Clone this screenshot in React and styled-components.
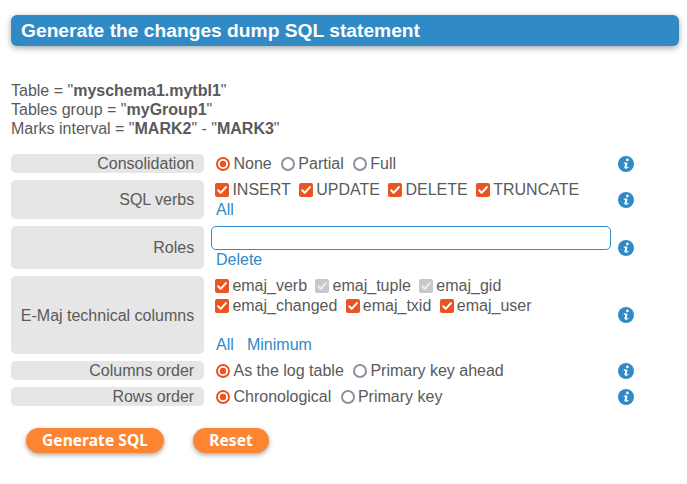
import React from "react";
import styled, { createGlobalStyle } from "styled-components";

const BLUE = "#308ac6";
const ORANGE = "#eb5420";

const GlobalStyle = createGlobalStyle`
  *, *::before, *::after { box-sizing: border-box; }
  body {
    margin: 0;
    background: #fff;
    color: #5a5a5a;
    font: 16px/19px "Liberation Sans", Arial, sans-serif;
  }
`;

const Page = styled.main`
  padding: 15px 8px 20px 11px;
`;

const Heading = styled.h1`
  margin: 0;
  height: 31px;
  padding-left: 10px;
  border-radius: 6px;
  background: ${BLUE};
  color: #fff;
  font-size: 19.2px;
  letter-spacing: 0.015px;
  line-height: 31px;
  white-space: nowrap;
  box-shadow: 0 2px 6px rgba(0, 0, 0, 0.35);
`;

const Summary = styled.p`
  margin: 35px 0 16px;
`;

const Form = styled.form`
  margin: 0;
`;

const Fields = styled.div`
  display: grid;
  grid-template-columns: 193px 400px 16px;
  column-gap: 7px;
  row-gap: 7px;
`;

const FieldName = styled.div`
  display: flex;
  align-items: center;
  justify-content: flex-end;
  height: ${(p) => p.$height}px;
  padding-right: 9.8px;
  border-radius: 5px;
  background: #e6e6e6;
  white-space: nowrap;
`;

const FieldValue = styled.div`
  min-width: 0;
`;

const OptionLine = styled.div`
  display: flex;
  height: ${(p) => p.$height || 20}px;
  padding-left: ${(p) => (p.$radio ? 5.4 : 4.3)}px;
  gap: ${(p) => p.$gap || 8.4}px;
  white-space: nowrap;
`;

const OptionLabel = styled.label`
  display: flex;
  align-items: flex-start;
  gap: 3.1px;
`;

const Mark = styled.svg`
  display: block;
  flex: none;
  width: 14px;
  height: 14px;
  margin-top: 3px;
`;

const Links = styled.div`
  display: flex;
  gap: 13.2px;
  height: 19px;
  padding-left: 5px;
  margin-top: ${(p) => p.$top || 0}px;
`;

const Link = styled.a`
  color: ${BLUE};
  text-decoration: none;
  cursor: pointer;
`;

const TextInput = styled.input`
  display: block;
  width: 400px;
  height: 24px;
  border: 1px solid ${BLUE};
  border-radius: 5px;
  background: #fff;
  outline: none;
`;

const InfoIcon = styled.svg`
  display: block;
  width: 16px;
  height: 16px;
  align-self: center;
`;

const Actions = styled.div`
  display: flex;
  gap: 29px;
  margin: 22px 0 0 15px;
`;

const Button = styled.button`
  width: ${(p) => p.$width}px;
  height: 25px;
  padding: 0;
  border: 0;
  border-radius: 13px;
  background: #fd8531;
  color: #fff;
  font: 700 15.5px/25px "Noto Sans", "Open Sans", sans-serif;
  letter-spacing: 0.06px;
  white-space: nowrap;
  box-shadow: 0 2px 5px rgba(0, 0, 0, 0.35);
`;

function Radio({ checked, children }) {
  return (
    <OptionLabel>
      <Mark viewBox="0 0 14 14">
        <circle cx="7" cy="7" r="6" fill="#fff" stroke={checked ? ORANGE : "#8f8f9d"} strokeWidth="2" />
        {checked && <circle cx="7" cy="7" r="3.2" fill={ORANGE} />}
      </Mark>
      {children}
    </OptionLabel>
  );
}

function Check({ disabled, children }) {
  return (
    <OptionLabel>
      <Mark viewBox="0 0 14 14">
        <rect width="14" height="14" rx="2" fill={disabled ? "#c7c7cc" : ORANGE} />
        <path d="M3.2 7.3 5.7 9.8 10.9 4.1" fill="none" stroke={disabled ? "#f0f0f2" : "#fff"} strokeWidth="2" strokeLinecap="round" strokeLinejoin="round" />
      </Mark>
      {children}
    </OptionLabel>
  );
}

function Info() {
  return (
    <InfoIcon viewBox="0 0 16 16">
      <circle cx="8" cy="8" r="8" fill={BLUE} />
      <circle cx="9.4" cy="3.9" r="1.35" fill="#fff" />
      <path d="M5.8 7.1H8.5L7.4 11.4Q7.2 12.5 8.2 12.3L10.5 11.3" fill="none" stroke="#fff" strokeWidth="1.1" />
      <path d="M8.5 6.9 7.3 12" fill="none" stroke="#fff" strokeWidth="2" />
    </InfoIcon>
  );
}

function Field({ name, height, children }) {
  return (
    <>
      <FieldName $height={height}>{name}</FieldName>
      <FieldValue>{children}</FieldValue>
      <Info />
    </>
  );
}

export default function App() {
  return (
    <Page>
      <GlobalStyle />
      <Heading>Generate the changes dump SQL statement</Heading>
      <Summary>
        Table = "<b>myschema1.mytbl1</b>"<br />
        Tables group = "<b>myGroup1</b>"<br />
        Marks interval = "<b>MARK2</b>" - "<b>MARK3</b>"
      </Summary>
      <Form onSubmit={(e) => e.preventDefault()}>
        <Fields>
          <Field name="Consolidation" height={19}>
            <OptionLine $radio $height={19} $gap={9.5}>
              <Radio checked>None</Radio>
              <Radio>Partial</Radio>
              <Radio>Full</Radio>
            </OptionLine>
          </Field>
          <Field name="SQL verbs" height={39}>
            <OptionLine>
              <Check>INSERT</Check>
              <Check>UPDATE</Check>
              <Check>DELETE</Check>
              <Check>TRUNCATE</Check>
            </OptionLine>
            <Links><Link>All</Link></Links>
          </Field>
          <Field name="Roles" height={43}>
            <TextInput aria-label="Roles" />
            <Links><Link>Delete</Link></Links>
          </Field>
          <Field name="E-Maj technical columns" height={78}>
            <OptionLine>
              <Check>emaj_verb</Check>
              <Check disabled>emaj_tuple</Check>
              <Check disabled>emaj_gid</Check>
            </OptionLine>
            <OptionLine>
              <Check>emaj_changed</Check>
              <Check>emaj_txid</Check>
              <Check>emaj_user</Check>
            </OptionLine>
            <Links $top={19}>
              <Link>All</Link>
              <Link>Minimum</Link>
            </Links>
          </Field>
          <Field name="Columns order" height={19}>
            <OptionLine $radio $height={19} $gap={9.5}>
              <Radio checked>As the log table</Radio>
              <Radio>Primary key ahead</Radio>
            </OptionLine>
          </Field>
          <Field name="Rows order" height={19}>
            <OptionLine $radio $height={19} $gap={9.5}>
              <Radio checked>Chronological</Radio>
              <Radio>Primary key</Radio>
            </OptionLine>
          </Field>
        </Fields>
        <Actions>
          <Button type="submit" $width={138}>Generate SQL</Button>
          <Button type="reset" $width={76}>Reset</Button>
        </Actions>
      </Form>
    </Page>
  );
}
